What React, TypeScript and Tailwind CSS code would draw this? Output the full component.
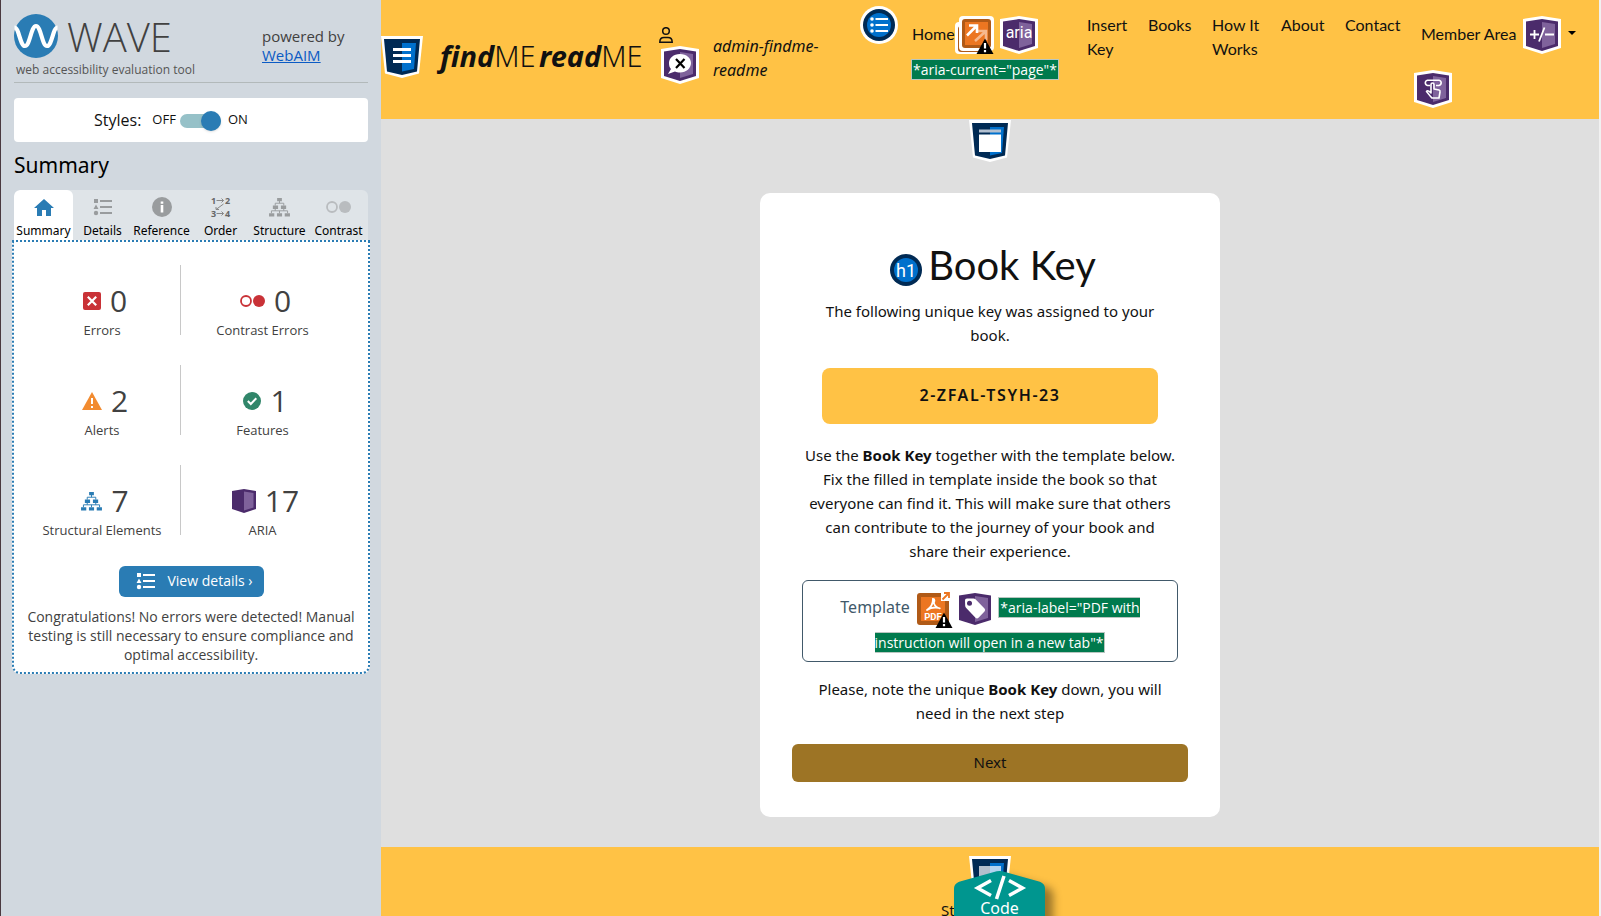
import React from "react";

const noto = "font-['Noto_Sans','Open_Sans',sans-serif]";
const openSans = "font-['Open_Sans','Noto_Sans',sans-serif]";
const lato = "font-['Lato','Noto_Sans',sans-serif]";

type Kids = { children?: React.ReactNode };

function AriaShield({ children, label }: Kids & { label: string }) {
  return (
    <svg role="img" aria-label={label} viewBox="0 0 38 38" className="-my-1 inline-block size-[38px] shrink-0 align-middle">
      <path d="M0 3 19 0l19 3v29l-19 6-19-6z" fill="#fff" />
      <path d="M3 5.500 19 3l16 2.500v24.500l-16 5-16-5z" fill="#4b2b6b" />
      <path d="M19 6 32 8v20l-13 4z" fill="#7f629b" />
      {children}
    </svg>
  );
}

function LandmarkShield({ children, label }: Kids & { label: string }) {
  return (
    <svg role="img" aria-label={label} viewBox="0 0 42 42" className="block size-[42px] shrink-0">
      <path d="M0 0h42l-4 37.500L21 42 4 37.500z" fill="#fff" />
      <path d="M3 3h36l-3 32.500L21 39 6 35.500z" fill="#002a54" />
      <path d="M21 7h14l-2 26-12 2.500z" fill="#0070cc" />
      {children}
    </svg>
  );
}

function ListGlyph({ className }: { className: string }) {
  return (
    <svg viewBox="0 0 20 18" className={className} fill="currentColor" aria-hidden="true">
      <path d="M1 1h4v4H1zM3 6.500 5.500 11h-5z" />
      <circle cx="3" cy="15" r="2.200" />
      <path d="M7 2h12v2H7zM7 8h12v2H7zM7 14h12v2H7z" />
    </svg>
  );
}

function TreeGlyph({ className }: { className: string }) {
  return (
    <svg viewBox="0 0 22 20" className={className} fill="currentColor" aria-hidden="true">
      <path d="M8.500 0h5v3.500h-5zM4 8h5.500v3.500H4zM12.500 8H18v3.500h-5.500zM0 16h5.500v3.500H0zM8.300 16h5.400v3.500H8.300zM16.500 16H22v3.500h-5.500z" />
      <path d="M11 3v2.500M6.500 8V5.500h9V8M6.500 11v2.500M15.500 11v2.500M2.500 16v-2.500h17V16M11 13.500V16" fill="none" stroke="currentColor" strokeWidth="1" />
    </svg>
  );
}

function WarningMark() {
  return (
    <g>
      <path d="M30 22.500 38.500 38H21.500z" fill="#000" />
      <path d="M28.900 27h2.200v5.500h-2.200zM28.900 34h2.200v2.200h-2.200z" fill="#fff" />
    </g>
  );
}

function Sidebar() {
  return (
    <aside className={`w-[381px] shrink-0 border-l border-[#4a3a40] bg-[#d1d8df] px-[13px] text-[#414141] ${openSans}`}>
      <header className="flex h-[83px] justify-between border-b border-[#b2b9ba] pt-[14px]">
        <div>
          <div className="flex items-center gap-[9px]">
            <svg viewBox="0 0 44 44" className="size-11" aria-hidden="true">
              <circle cx="22" cy="22" r="22" fill="#2a7cb4" />
              <path d="M.5 13.500c4.500 0 5.500 18.500 10.500 18.500s6-20 11-20 6 20 11 20 6-18.500 10.500-18.500" fill="none" stroke="#fff" strokeWidth="4.200" />
            </svg>
            <span className="pt-0.5 text-[40px] leading-[42px] font-light">WAVE</span>
          </div>
          <p className="pl-0.5 text-[12px] leading-6 text-[#555]">web accessibility evaluation tool</p>
        </div>
        <p className="w-[106px] pt-[13px] text-[15px] leading-[19px]">
          powered by
          <br />
          <a href="#webaim" className="text-[#0b5bc4] underline">WebAIM</a>
        </p>
      </header>

      <label className="mt-[15px] flex h-11 items-center rounded bg-white pl-20 text-[#111]">
        <span className="mr-[11px] text-base">Styles:</span>
        <span className="text-[13px]">OFF</span>
        <input type="checkbox" role="switch" defaultChecked className="peer sr-only" />
        <span className="mt-0.5 mr-[7px] ml-1 flex h-[14px] w-[41px] items-center justify-end rounded-full bg-[#96c1c8]">
          <span className="size-5 shrink-0 rounded-full bg-[#2a7cb4] shadow" />
        </span>
        <span className="text-[13px]">ON</span>
      </label>

      <h2 className={`pt-[7px] pb-[9px] text-[21px] leading-8 text-black ${noto}`}>Summary</h2>

      <div role="tablist" className={`grid h-[50px] grid-cols-6 overflow-hidden rounded-t-md bg-[#dfe4e8] text-[12px] text-black ${noto}`}>
        <Tab label="Summary" active>
          <svg viewBox="0 0 20 17" className="h-[17px] w-5" fill="#2a7cb4" aria-hidden="true">
            <path d="M10 0 20 9h-3v8h-5v-6H8v6H3V9H0z" />
          </svg>
        </Tab>
        <Tab label="Details"><ListGlyph className="h-[18px] w-5" /></Tab>
        <Tab label="Reference">
          <svg viewBox="0 0 20 20" className="size-5" aria-hidden="true">
            <circle cx="10" cy="10" r="10" fill="currentColor" />
            <path d="M8.700 4.500h2.600v2.300H8.700zM8.700 8h2.600v7.500H8.700z" fill="#fff" />
          </svg>
        </Tab>
        <Tab label="Order">
          <svg viewBox="0 0 20 20" className="size-5 overflow-visible" aria-hidden="true">
            <g fill="#666" fontFamily="Noto Sans" fontWeight="700" fontSize="9">
              <text x="0" y="7">1</text><text x="14" y="7">2</text>
              <text x="0" y="20">3</text><text x="14" y="20">4</text>
            </g>
            <path d="M5.500 3.500h7M10.500 1.500l2 2-2 2M5.500 16.500h7M10.500 14.500l2 2-2 2M12.500 7 5 12.500M8 12.500H5V10" fill="none" stroke="#888" />
          </svg>
        </Tab>
        <Tab label="Structure"><TreeGlyph className="h-[19px] w-[21px]" /></Tab>
        <Tab label="Contrast">
          <svg viewBox="0 0 25 12" className="h-3 w-[25px] text-[#b9bcbf]" aria-hidden="true">
            <circle cx="6" cy="6" r="5" fill="none" stroke="currentColor" strokeWidth="1.800" />
            <circle cx="19" cy="6" r="6" fill="currentColor" />
          </svg>
        </Tab>
      </div>

      <section aria-label="Summary" className="-mx-[2px] rounded-b-lg border-2 border-dotted border-[#2a7cb4] bg-white pt-[23px] pb-2">
        <div className="ml-[7px] grid w-80 grid-cols-2 gap-y-[30px]">
          <Stat value="0" label="Errors">
            <svg viewBox="0 0 18 18" className="size-[18px]" aria-hidden="true">
              <rect width="18" height="18" rx="2" fill="#c93237" />
              <path d="m4.800 4.800 8.400 8.400m0-8.400-8.400 8.400" stroke="#fff" strokeWidth="2.200" />
            </svg>
          </Stat>
          <Stat value="0" label="Contrast Errors">
            <svg viewBox="0 0 25 12" className="h-3 w-[25px]" aria-hidden="true">
              <circle cx="6" cy="6" r="5" fill="none" stroke="#c93237" strokeWidth="1.800" />
              <circle cx="19" cy="6" r="6" fill="#c93237" />
            </svg>
          </Stat>
          <Stat value="2" label="Alerts">
            <svg viewBox="0 0 20 18" className="h-[18px] w-5" aria-hidden="true">
              <path d="m10 0 10 18H0z" fill="#f28b30" />
              <path d="M9 6h2v6H9zM9 14h2v2H9z" fill="#fff" />
            </svg>
          </Stat>
          <Stat value="1" label="Features">
            <svg viewBox="0 0 18 18" className="size-[18px]" aria-hidden="true">
              <circle cx="9" cy="9" r="9" fill="#31866a" />
              <path d="m4.800 9 3 3 5.500-5.800" fill="none" stroke="#fff" strokeWidth="2" />
            </svg>
          </Stat>
          <Stat value="7" label="Structural Elements"><TreeGlyph className="h-[19px] w-[21px] text-[#2a7cb4]" /></Stat>
          <Stat value="17" label="ARIA">
            <svg viewBox="0 0 24 24" className="size-6" aria-hidden="true">
              <path d="m0 2 12-2 12 2v18l-12 4-12-4z" fill="#4b2b6b" />
              <path d="m12 2.500 9.500 1.500v14.500L12 21.500z" fill="#7f629b" />
            </svg>
          </Stat>
        </div>
        <button type="button" className="mx-auto mt-[31px] flex h-[31px] w-[145px] items-center justify-between rounded-md bg-[#2a7cb4] pr-[11px] pb-px pl-[17px] text-sm text-white">
          <ListGlyph className="h-[18px] w-5" />
          View details ›
        </button>
        <p className="px-3 pt-[10px] text-center text-sm leading-[19px]">
          Congratulations! No errors were detected! Manual testing is still necessary to ensure compliance and optimal accessibility.
        </p>
      </section>
    </aside>
  );
}

function Tab({ label, active, children }: Kids & { label: string; active?: boolean }) {
  return (
    <button type="button" role="tab" aria-selected={!!active} className={active ? "flex flex-col items-center rounded-t-md bg-white" : "flex flex-col items-center"}>
      <span className="mt-0.5 mb-px flex h-[30px] items-center text-[#999c9e]">{children}</span>
      <span className="leading-4">{label}</span>
    </button>
  );
}

function Stat({ value, label, children }: Kids & { value: string; label: string }) {
  return (
    <div className="flex h-[70px] flex-col items-center border-[#c8c8c8] pt-[15px] pl-[3px] odd:border-r">
      <span className="flex items-center gap-[9px] pl-1.5 text-[30px] leading-[42px]">
        {children}
        {value}
      </span>
      <span className="text-[13px] leading-4">{label}</span>
    </div>
  );
}

function Note({ children }: Kids) {
  return (
    <span className={`border border-[#b9c6c0] bg-[#007a4d] box-decoration-slice px-px text-sm leading-[18px] text-white ${openSans}`}>
      {children}
    </span>
  );
}

function Header() {
  return (
    <header className="flex h-[119px] shrink-0 items-start bg-[#ffc245] text-[#111]">
      <div className="mt-9">
        <LandmarkShield label="Header">
          <path d="M12 12h18v3H12zM12 18h18v3H12zM12 24h18v3H12z" fill="#fff" />
        </LandmarkShield>
      </div>
      <a href="#home" className={`mt-9 ml-[17px] w-[219px] text-[29px] leading-10 whitespace-nowrap ${noto}`}>
        <b className="italic">find</b>
        <span className="font-light">ME</span> <b className="-ml-1 italic">read</b>
        <span className="font-light">ME</span>
      </a>
      <div className="mt-[27px] w-[54px]">
        <svg viewBox="0 0 14 16" className="h-4 w-[14px]" fill="none" stroke="currentColor" strokeWidth="1.500" aria-hidden="true">
          <circle cx="7" cy="4" r="3.300" />
          <path d="M.8 15.200c0-3 1.800-4.700 4.200-4.700h4c2.400 0 4.200 1.700 4.200 4.700z" />
        </svg>
        <div className="mt-[3px] ml-0.5 flex h-[38px] items-center">
          <AriaShield label="Hidden">
            <path d="M19 8c6.500 0 11 4 11 9s-4.500 9.500-11 9.500c-2 0-3.500-.3-5-1L7 28l3-5c-1.500-1.500-2-3.500-2-6 0-5 4.500-9 11-9z" fill="#fff" />
            <path d="m15 13 8.500 9m0-9L15 22" stroke="#000" strokeWidth="2.200" />
          </AriaShield>
        </div>
      </div>
      <p className={`mt-[34px] w-[130px] text-base leading-6 italic ${noto}`}>
        admin-findme-
        <br />
        readme
      </p>

      <nav className={`flex flex-1 pt-1.5 text-base leading-6 ${lato}`} aria-label="Main">
        <svg role="img" aria-label="Unordered list" viewBox="0 0 38 38" className="ml-[17px] size-[38px] shrink-0">
          <circle cx="19" cy="19" r="19" fill="#fff" />
          <circle cx="19" cy="19" r="16" fill="#002a54" />
          <circle cx="19" cy="19" r="12" fill="#0070cc" />
          <g fill="#fff">
            <circle cx="12" cy="13" r="1.800" /><circle cx="12" cy="19" r="1.800" /><circle cx="12" cy="25" r="1.800" />
            <path d="M15.500 12h12.500v2H15.500zM15.500 18h12.500v2H15.500zM15.500 24h12.500v2H15.500z" />
          </g>
        </svg>
        <ul className="ml-[14px] flex flex-1 items-start">
          <li className="w-[175px] pt-2.5">
            <a href="#home" aria-current="page" className="block">
              <span className="flex h-[38px] items-center">
                <span className="pb-0.5">Home</span>
                <svg role="img" aria-label="Link opens new window" viewBox="0 0 39 38" className="mr-[6px] h-[38px] w-[39px]">
                  <rect x="0" y="6" width="34" height="32" rx="4" fill="#fff" />
                  <rect x="3" y="10" width="30" height="26" rx="3" fill="#b05a17" />
                  <rect x="4" y="0" width="35" height="35" rx="4" fill="#fff" />
                  <rect x="7" y="3" width="29" height="29" rx="3" fill="#b05a17" />
                  <rect x="10" y="6" width="23" height="23" fill="#ec7621" />
                  <g fill="none" strokeWidth="2.600">
                    <path d="m20 25 10.500-9.500M22 15h9v9" stroke="#f6b98e" />
                    <path d="m12 19.500 9.500-9.500M14 9.500h8V17" stroke="#fff" />
                  </g>
                  <WarningMark />
                </svg>
                <AriaShield label="ARIA current">
                  <text x="19" y="22" textAnchor="middle" fontSize="16" fontFamily="Roboto" fill="#fff">aria</text>
                </AriaShield>
              </span>
              <span className="-ml-px block pt-[3px] leading-6 whitespace-nowrap"><Note>*aria-current="page"*</Note></span>
            </a>
          </li>
          <li className="w-[61px] pt-[7px]"><a href="#insert">Insert<br />Key</a></li>
          <li className="w-16 pt-[7px]"><a href="#books">Books</a></li>
          <li className="w-[69px] pt-[7px]"><a href="#how">How It<br />Works</a></li>
          <li className="w-16 pt-[7px]"><a href="#about">About</a></li>
          <li className="w-[69px] pt-[7px]"><a href="#contact">Contact</a></li>
          <li className="pt-2.5">
            <button type="button" className="ml-[7px] flex h-[38px] items-center gap-[7px] whitespace-nowrap">
              <span className="pb-0.5">Member Area</span>
              <AriaShield label="ARIA expanded">
                <path d="M7 18.500h9M11.500 14v9M22 18.500h9M16 25.500l5.500-14" stroke="#fff" strokeWidth="1.800" fill="none" />
              </AriaShield>
              <svg viewBox="0 0 8 4" className="-mt-1 h-1 w-2" aria-hidden="true"><path d="M0 0h8L4 4z" /></svg>
            </button>
            <div className="mt-4 flex h-[38px] items-center">
              <AriaShield label="ARIA popup">
                <g fill="none" stroke="#fff" strokeWidth="1.600" strokeLinejoin="round">
                  <path d="M16 15.500h-2.500a2.700 2.700 0 0 1 0-5.300h11.500a2.700 2.700 0 0 1 0 5.300H22" />
                  <path d="M17 23V14.500c0-2 3-2 3 0V19l5 1c1 .3 1.200 1 1 2l-1 6h-7c-2-1.500-3-4-5.500-6.500.8-1.200 2.500-.8 4.500 1.500z" />
                </g>
              </AriaShield>
            </div>
          </li>
        </ul>
      </nav>
    </header>
  );
}

function BookCard() {
  return (
    <article className={`mt-[31px] w-[460px] rounded-[10px] bg-white px-8 pt-12 pb-[35px] text-center text-[15px] leading-6 text-[#111] ${noto}`}>
      <h1 className={`flex items-center justify-center gap-[3px] pl-[3px] text-[40px] leading-[48px] ${lato}`}>
        <svg role="img" aria-label="Heading level 1" viewBox="0 0 38 38" className="mt-2.5 size-[38px]">
          <circle cx="19" cy="19" r="16" fill="#002a54" />
          <circle cx="19" cy="19" r="12" fill="#0070cc" />
          <text x="19" y="26" textAnchor="middle" fontSize="18" fontFamily="Roboto" fill="#fff">h1</text>
        </svg>
        Book Key
      </h1>
      <p className="px-[30px] pt-[10px]">The following unique key was assigned to your book.</p>
      <p className="mx-[30px] mt-[21px] flex h-14 items-center justify-center rounded-lg bg-[#ffc245] pb-0.5 text-base font-semibold tracking-widest">
        2-ZFAL-TSYH-23
      </p>
      <p className="mt-[19px] px-2">
        Use the <b>Book Key</b> together with the template below. Fix the filled in template inside the book so that everyone can find it. This will make sure that others can contribute to the journey of your book and share{"\u00a0"}their experience.
      </p>
      <a href="#template" className="mx-2.5 mt-[17px] block rounded-md border border-[#41596a] px-[30px] pt-[9px] pb-px text-base leading-[35px] text-[#41596a]">
        Template{" "}
        <svg role="img" aria-label="Link to PDF document" viewBox="0 0 38 38" className="-my-1 inline-block size-[38px] overflow-visible align-middle">
          <rect x="3" y="3" width="32" height="32" rx="3" fill="#b05a17" />
          <rect x="7" y="7" width="24" height="24" fill="#ec7621" />
          <path d="M27 1h9v10h-9z" fill="#fff" />
          <path d="m28.500 9.500 6-6M30 3h5v5" fill="none" stroke="#ec7621" strokeWidth="1.800" />
          <path d="M13 20c4-2.500 6-6 6-11 2 0 1.500 2 .8 4 1.500 4 3.500 5 6 5.300M13 20c3-2 8-3 12-2" fill="none" stroke="#fff" strokeWidth="1.800" strokeLinecap="round" />
          <text x="19" y="30" textAnchor="middle" fontSize="9.500" fontWeight="700" fontFamily="Roboto" fill="#fff">PDF</text>
          <WarningMark />
        </svg>{" "}
        <AriaShield label="ARIA label">
          <path d="M11 8.500h6.500a3 3 0 0 1 2 .8l9 9.200a2.200 2.200 0 0 1 0 3l-6 6.200a2.200 2.200 0 0 1-3 0l-9.500-10a3 3 0 0 1-.8-2l-.2-5a2 2 0 0 1 2-2.200z" fill="#fff" />
          <circle cx="13.500" cy="13.300" r="2.500" fill="#4b2b6b" />
        </AriaShield>{" "}
        <Note>*aria-label="PDF with instruction will open in a new tab"*</Note>
      </a>
      <p className="mt-[15px] px-4">
        Please, note the unique <b>Book Key</b> down, you will need in the next step
      </p>
      <button type="button" className="mt-[19px] h-[38px] w-full rounded-md bg-[#9d7425] pb-0.5">Next</button>
    </article>
  );
}

export default function App() {
  return (
    <div className="relative flex h-screen overflow-hidden bg-[#f1f1f1]">
      <Sidebar />
      <div className="mr-0.5 flex min-w-0 flex-1 flex-col">
        <Header />
        <main className="flex shrink-0 flex-col items-center bg-[#dfdfdf] pt-px pb-[30px]">
          <LandmarkShield label="Main content">
            <path d="M10 9.500h22v3H10z" fill="#b3c0d0" />
            <path d="M10 14.500h22V32H10z" fill="#fff" />
          </LandmarkShield>
          <BookCard />
        </main>
        <footer className={`flex flex-1 flex-col items-center bg-[#ffc245] pt-[9px] text-[#111] ${noto}`}>
          <div className="relative">
            <LandmarkShield label="Footer">
              <path d="M10 10h22v14H10z" fill="#fff" opacity=".7" />
            </LandmarkShield>
            <button type="button" className="absolute top-[15px] -left-[15px] h-[60px] w-[91px]">
              <svg viewBox="0 0 91 60" className="absolute inset-0 size-full overflow-visible drop-shadow-[8px_6px_4px_rgba(0,0,0,0.4)]" aria-hidden="true">
                <path d="M0 60V18c0-4 2-6 6-7.500L40 1q5.500-2 11 0l34 9.500c4 1.500 6 3.500 6 7.500v42z" fill="#00968f" />
                <path d="M37 9.500 23.500 17 37 24.500M55 9.500 68.500 17 55 24.500M50 5 42.500 28" fill="none" stroke="#fff" strokeWidth="3.500" />
              </svg>
              <span className="relative block pt-[13px] text-base leading-5 text-white">Code</span>
            </button>
          </div>
          <p className="w-[98px] text-[15px] leading-6">St</p>
        </footer>
      </div>
    </div>
  );
}
